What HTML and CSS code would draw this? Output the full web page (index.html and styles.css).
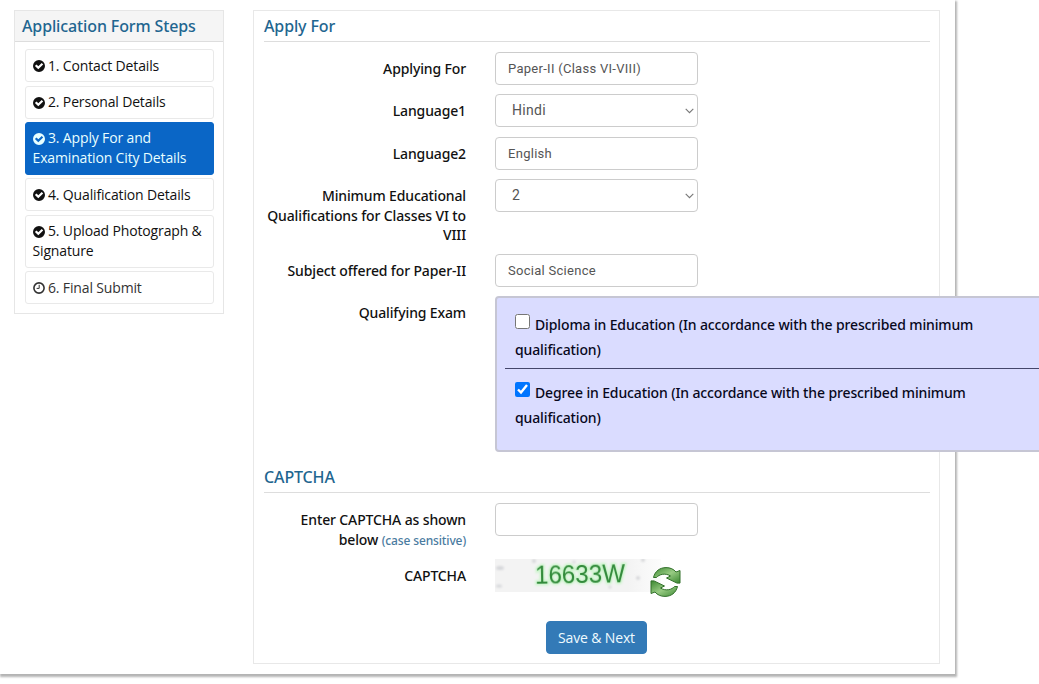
FILE: index.html
```html
<!DOCTYPE html>
<html lang="en">
<head>
    <meta charset="UTF-8">
    <meta name="viewport" content="width=device-width, initial-scale=1.0">
    <title>Application Form</title>
    <link rel="stylesheet" href="styles.css">
</head>
<body>
    <svg class="symbols" width="0" height="0">
        <symbol id="ok" viewBox="0 0 12 12">
            <path fill="currentColor" fill-rule="evenodd" d="M6 0a6 6 0 1 1 0 12A6 6 0 0 1 6 0zM1.9 5.9l3.4 3.4 4.9-4.8-1.5-1.5-3.4 3.3-1.8-1.9z"/>
        </symbol>
        <symbol id="clock" viewBox="0 0 12 12">
            <circle cx="6" cy="6" r="5.1" fill="none" stroke="currentColor" stroke-width="1.6"/>
            <path d="M6.2 2.8v3.6H3.6" fill="none" stroke="currentColor" stroke-width="1"/>
        </symbol>
    </svg>

    <div class="wrapper">
        <div class="steps">
            <h3 class="steps-title">Application Form Steps</h3>
            <ul class="steps-list">
                <li><svg class="icon"><use href="#ok"/></svg> 1. Contact Details</li>
                <li><svg class="icon"><use href="#ok"/></svg> 2. Personal Details</li>
                <li class="active"><svg class="icon"><use href="#ok"/></svg> 3. Apply For and<br>Examination City Details</li>
                <li><svg class="icon"><use href="#ok"/></svg> 4. Qualification Details</li>
                <li><svg class="icon"><use href="#ok"/></svg> 5. Upload Photograph &amp;<br>Signature</li>
                <li class="pending"><svg class="icon"><use href="#clock"/></svg> 6. Final Submit</li>
            </ul>
        </div>

        <form class="panel">
            <h3 class="panel-title">Apply For</h3>
            <div class="row">
                <label for="paper">Applying For</label>
                <input type="text" class="control" id="paper" value="Paper-II (Class VI-VIII)">
            </div>
            <div class="row row-tall">
                <label for="lang1">Language1</label>
                <div class="select-wrap">
                    <select class="control" id="lang1"><option>Hindi</option></select>
                    <svg class="arrow" viewBox="0 0 9 6"><path d="M.7.8l3.8 3.8L8.3.8"/></svg>
                </div>
            </div>
            <div class="row">
                <label for="lang2">Language2</label>
                <input type="text" class="control" id="lang2" value="English">
            </div>
            <div class="row row-min">
                <label for="minqual">Minimum Educational<br>Qualifications for Classes VI to<br>VIII</label>
                <div class="select-wrap">
                    <select class="control" id="minqual"><option>2</option></select>
                    <svg class="arrow" viewBox="0 0 9 6"><path d="M.7.8l3.8 3.8L8.3.8"/></svg>
                </div>
            </div>
            <div class="row row-subject">
                <label for="subject">Subject offered for Paper-II</label>
                <input type="text" class="control" id="subject" value="Social Science">
            </div>
            <div class="row row-exam">
                <label>Qualifying Exam</label>
                <div class="exam-box">
                    <label class="exam"><input type="checkbox"><span>Diploma in Education (In accordance with the prescribed minimum</span><br>qualification)</label>
                    <label class="exam"><input type="checkbox" checked><span>Degree in Education (In accordance with the prescribed minimum</span><br>qualification)</label>
                </div>
            </div>

            <h3 class="panel-title">CAPTCHA</h3>
            <div class="row row-enter">
                <label for="captcha">Enter CAPTCHA as shown<br>below <small>(case sensitive)</small></label>
                <input type="text" class="control" id="captcha">
            </div>
            <div class="row row-captcha">
                <label>CAPTCHA</label>
                <div class="captcha">
                    <svg class="captcha-img" width="166" height="33" viewBox="0 0 166 33">
                        <defs>
                            <linearGradient id="fade"><stop offset=".8" stop-color="#f3f3f3"/><stop offset="1" stop-color="#fcfcfc"/></linearGradient>
                            <filter id="soft"><feGaussianBlur stdDeviation="1"/></filter>
                            <filter id="edge"><feGaussianBlur stdDeviation=".45"/></filter>
                        </defs>
                        <rect width="166" height="33" fill="url(#fade)"/>
                        <g fill="#d6d7da" filter="url(#soft)">
                            <ellipse cx="5" cy="9" rx="4" ry="2"/><ellipse cx="4" cy="27" rx="3" ry="1.5"/>
                            <circle cx="39" cy="2" r="2"/><circle cx="143" cy="19" r="2"/><circle cx="148" cy="1" r="2"/>
                            <circle cx="79" cy="3" r="1.5"/><circle cx="115" cy="28" r="1.5"/>
                        </g>
                        <g transform="rotate(-1 85 16)">
                            <text class="code code-glow" x="40" y="24" textLength="90" lengthAdjust="spacingAndGlyphs" filter="url(#soft)">16633W</text>
                            <text class="code" x="40" y="24" textLength="90" lengthAdjust="spacingAndGlyphs" filter="url(#edge)">16633W</text>
                        </g>
                    </svg>
                    <svg class="refresh" width="32" height="32" viewBox="0 0 32 32">
                        <defs>
                            <linearGradient id="leaf" x1="0" y1="0" x2="1" y2="1"><stop offset="0" stop-color="#3f8a35"/><stop offset=".5" stop-color="#98cb83"/><stop offset="1" stop-color="#3a8730"/></linearGradient>
                        </defs>
                        <g fill="url(#leaf)" stroke="#32702b" stroke-width="1" stroke-linejoin="round">
                            <path d="M3.5 11.5C5 5 10 1.6 16 1.6c4.3 0 7.6 1.5 10 4.4l4-1.5v12.6h-3L16.5 12l4-2C15 6.5 9 8.5 6.5 11.5z"/>
                            <path d="M3.5 11.5C5 5 10 1.6 16 1.6c4.3 0 7.6 1.5 10 4.4l4-1.5v12.6h-3L16.5 12l4-2C15 6.5 9 8.5 6.5 11.5z" transform="rotate(180 15.5 16)"/>
                        </g>
                    </svg>
                </div>
            </div>
            <div class="actions">
                <button type="button" class="save">Save &amp; Next</button>
            </div>
        </form>
    </div>
</body>
</html>
```
FILE: styles.css
```css
* {
    box-sizing: border-box;
}

html {
    overflow: hidden;
}

body {
    margin: 0;
    height: 684px;
    background: #fff;
    color: #111;
    font-family: "Open Sans", "Noto Sans", sans-serif;
    font-size: 14px;
    line-height: 20px;
}

.symbols {
    position: absolute;
}

.wrapper {
    display: flex;
    align-items: flex-start;
    gap: 29px;
    width: 955px;
    height: 674px;
    padding: 10px 15px 0 14px;
    box-shadow: 1px 2px 2px 1px #b4b4b4;
}

h3 {
    margin: 0;
    font-family: "Noto Sans", sans-serif;
    font-size: 16px;
    font-weight: 500;
    letter-spacing: -0.13px;
    color: #1f6690;
}

.steps {
    width: 210px;
    height: 304px;
    border: 1px solid #e6e6e6;
}

.steps-title {
    height: 31px;
    padding: 5px 7px;
    background: #f5f5f5;
    border-bottom: 1px solid #ddd;
}

.steps-list {
    display: flex;
    flex-direction: column;
    gap: 3.4px;
    margin: 0;
    padding: 7.2px 9px 0 10px;
    list-style: none;
    letter-spacing: -0.15px;
}

    .steps-list li {
        padding: 5.5px 6.5px;
        border: 1px solid #e9e9e9;
        border-radius: 3px;
        white-space: nowrap;
    }

    .steps-list .active {
        background: #0a66c6;
        border-color: #0a66c6;
        color: #e8ffff;
    }

    .steps-list .pending {
        color: #333;
    }

.icon {
    width: 12px;
    height: 12px;
    vertical-align: -1.5px;
}

.panel {
    width: 687px;
    height: 654px;
    padding: 0 9px 0 10px;
    border: 1px solid #e8e8e8;
}

.panel-title {
    height: 31px;
    padding-top: 5px;
    margin-bottom: 10px;
    border-bottom: 1px solid #ddd;
}

.row {
    display: flex;
    gap: 29px;
    height: 42px;
}

    .row > label {
        width: 202px;
        flex: none;
        padding-top: 7px;
        font-family: "Noto Sans", sans-serif;
        line-height: 19.5px;
        font-weight: 500;
        letter-spacing: -0.13px;
        text-align: right;
        white-space: nowrap;
    }

.row-tall {
    height: 43px;
}

.row-min {
    height: 75px;
}

.row-subject {
    height: 42px;
}

.row-exam {
    height: 166px;
}

.row-enter {
    height: 56px;
}

.row-captcha {
    height: 62px;
}

small {
    font-size: 12px;
    color: #4a7ba0;
}

.control {
    display: block;
    width: 203px;
    height: 33px;
    padding: 0 12px;
    border: 1px solid #ccc;
    border-radius: 4px;
    background: #fff;
    color: #555;
    font-family: Roboto, sans-serif;
    font-size: 13px;
    letter-spacing: 0.28px;
}

select.control {
    appearance: none;
    padding: 0 16px 1px;
    font-size: 14px;
}

.select-wrap {
    position: relative;
    height: 33px;
}

.arrow {
    position: absolute;
    right: 4px;
    top: 14px;
    width: 9px;
    height: 6px;
    fill: none;
    stroke: #777;
    stroke-width: 1.1;
}

.exam-box {
    flex: none;
    width: 560px;
    height: 156px;
    padding: 10px 8px;
    background: #dadcff;
    border: 2px solid #c6c6d4;
    border-radius: 4px;
    position: relative;
}

.exam {
    display: block;
    padding: 5px 10px 6px;
    font-family: "Noto Sans", sans-serif;
    line-height: 24.5px;
    font-weight: 500;
    letter-spacing: -0.13px;
    white-space: nowrap;
    color: #08081c;
}

    .exam + .exam {
        padding-top: 12px;
        border-top: 1px solid #44466a;
    }

    .exam input {
        width: 15px;
        height: 15px;
        margin: 0 5px 0 0;
        vertical-align: 1px;
    }

.captcha {
    display: flex;
}

.captcha-img {
    flex: none;
}

.code {
    font-family: "Liberation Sans", Arial, sans-serif;
    font-size: 25px;
    fill: #338a3b;
}

.code-glow {
    fill: #a5eca5;
    stroke: #c8f5c8;
    stroke-width: 3px;
}

.refresh {
    margin: 7px 0 0 -11px;
}

.actions {
    display: flex;
    padding-left: 282px;
}

.save {
    width: 101px;
    height: 33px;
    padding: 0;
    background: #337ab7;
    border: 1px solid #337ab7;
    border-radius: 4px;
    color: #effaff;
    font: 14px "Open Sans", sans-serif;
    letter-spacing: -0.15px;
}
```
